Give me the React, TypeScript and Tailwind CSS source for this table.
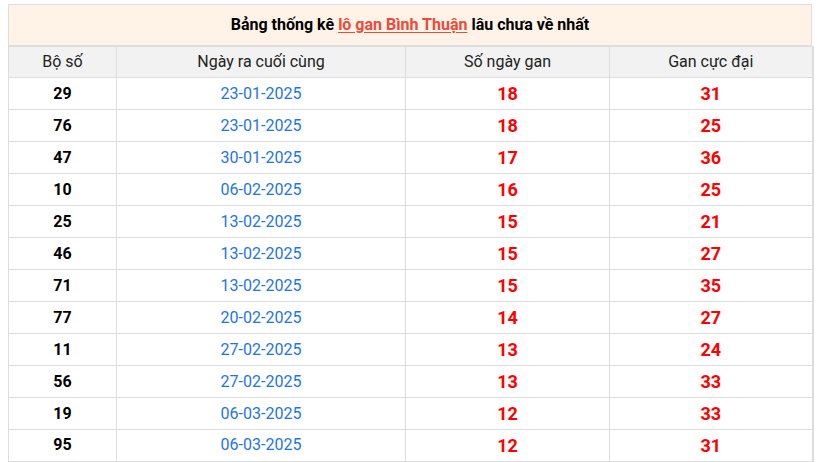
import React from "react";

const rows = [
  ["29", "23-01-2025", "18", "31"],
  ["76", "23-01-2025", "18", "25"],
  ["47", "30-01-2025", "17", "36"],
  ["10", "06-02-2025", "16", "25"],
  ["25", "13-02-2025", "15", "21"],
  ["46", "13-02-2025", "15", "27"],
  ["71", "13-02-2025", "15", "35"],
  ["77", "20-02-2025", "14", "27"],
  ["11", "27-02-2025", "13", "24"],
  ["56", "27-02-2025", "13", "33"],
  ["19", "06-03-2025", "12", "33"],
  ["95", "06-03-2025", "12", "31"],
];

export default function App() {
  return (
    <div className="bg-white w-[817px] h-[462px] pt-[4px] pl-[8px] font-['Roboto',sans-serif] text-[#222]">
      <div className="w-[804px]">
        <div className="h-[42px] border border-[#ddd] bg-[#fff2e6] flex items-center justify-center text-[16px] font-bold text-black">
          <span>
            Bảng thống kê{" "}
            <a className="text-[#ee4a3b] underline underline-offset-2">lô gan Bình Thuận</a>{" "}
            lâu chưa về nhất
          </span>
        </div>
        <table className="w-[804px] border-collapse table-fixed border-l border-r-2 border-b-2 border-[#ddd]">
          <colgroup>
            <col className="w-[108px]" />
            <col className="w-[289px]" />
            <col className="w-[204px]" />
            <col className="w-[203px]" />
          </colgroup>
          <thead>
            <tr className="h-[31px] bg-[#f2f2f2] text-[16px]">
              <th className="font-normal border border-[#ddd]">Bộ số</th>
              <th className="font-normal border border-[#ddd]">Ngày ra cuối cùng</th>
              <th className="font-normal border border-[#ddd]">Số ngày gan</th>
              <th className="font-normal border border-[#ddd]">Gan cực đại</th>
            </tr>
          </thead>
          <tbody>
            {rows.map((r) => (
              <tr key={r[0] + r[1]} className="h-[32px] text-center">
                <td className="border border-[#ddd] text-[16px] font-bold text-black">{r[0]}</td>
                <td className="border border-[#ddd] text-[16px] text-[#1f74e6]">{r[1]}</td>
                <td className="border border-[#ddd] text-[18px] font-bold text-[#ff0000]">{r[2]}</td>
                <td className="border border-[#ddd] text-[18px] font-bold text-[#ff0000]">{r[3]}</td>
              </tr>
            ))}
          </tbody>
        </table>
      </div>
    </div>
  );
}
